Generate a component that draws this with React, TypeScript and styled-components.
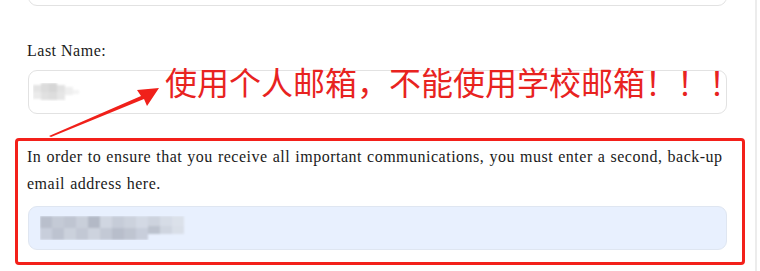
import React from 'react';
import styled, { createGlobalStyle } from 'styled-components';

const Global = createGlobalStyle`
  html, body {
    margin: 0;
    padding: 0;
    background: #fff;
  }
  body {
    font-family: "Liberation Serif", "Times New Roman", serif;
    color: #1a1a1a;
    overflow: hidden;
  }
`;

const Page = styled.div`
  position: relative;
  width: 760px;
  height: 271px;
  overflow: hidden;
  display: flex;
`;

const Form = styled.div`
  width: 699px;
  margin-left: 28px;
  margin-top: -38px;
  display: flex;
  flex-direction: column;
`;

const Scrollbar = styled.div`
  margin-left: 28px;
  width: 2px;
  background: #ececec;
`;

const Field = styled.div<{ $filled?: boolean }>`
  box-sizing: border-box;
  height: 44px;
  border: 1px solid ${p => (p.$filled ? '#dfe6f1' : '#e2e2e2')};
  border-radius: 9px;
  background: ${p => (p.$filled ? '#e8f0fe' : '#fff')};
  display: flex;
  align-items: center;
  padding-left: ${p => (p.$filled ? '11px' : '4px')};
`;

const Label = styled.div`
  font-size: 16px;
  letter-spacing: 0.5px;
  margin: 33px 0 0 -1px;
  height: 31px;
  line-height: 24px;
`;

const Notice = styled.div`
  position: relative;
  margin-top: 29px;
`;

const Text = styled.p`
  margin: 0 0 9px -1px;
  font-size: 16px;
  letter-spacing: 0.5px;
  word-spacing: 0.6px;
  line-height: 27px;
`;

const RedFrame = styled.div`
  position: absolute;
  left: -13px;
  top: -5px;
  width: 730px;
  height: 127px;
  box-sizing: border-box;
  border: 3.5px solid #f3201a;
  border-radius: 4px;
  pointer-events: none;
`;

const Warning = styled.div`
  position: absolute;
  left: 165px;
  top: 63px;
  font-family: "Noto Sans CJK SC", "Noto Sans", sans-serif;
  font-size: 32px;
  line-height: 36px;
  color: #e8231f;
  white-space: nowrap;
`;

const Overlay = styled.svg`
  position: absolute;
  left: 0;
  top: 0;
  pointer-events: none;
`;

type Cell = [number, number, number, number, string];

function Mosaic({ w, h, cells }: { w: number; h: number; cells: Cell[] }) {
  return (
    <svg width={w} height={h}>
      <defs>
        <filter id="soft" x="-10%" y="-10%" width="120%" height="120%">
          <feGaussianBlur stdDeviation="0.8" />
        </filter>
      </defs>
      <g filter="url(#soft)">
        {cells.map(([x, y, cw, ch, c], i) => (
          <rect key={i} x={x} y={y} width={cw} height={ch} fill={c} />
        ))}
      </g>
    </svg>
  );
}

const nameCells: Cell[] = [
  [0, 2, 8, 7, '#e4e4e4'],
  [8, 0, 8, 9, '#dcdcdc'],
  [16, 0, 8, 9, '#d6d6d6'],
  [24, 2, 8, 7, '#e2e2e2'],
  [0, 9, 8, 7, '#ebebeb'],
  [8, 9, 8, 8, '#e1e1e1'],
  [16, 9, 8, 8, '#dddddd'],
  [24, 9, 8, 8, '#e6e6e6'],
  [32, 4, 8, 8, '#efefef'],
  [40, 7, 6, 4, '#f3f3f3'],
];

const mailCells: Cell[] = [
  [0, 0, 12, 12, '#b9bfcc'],
  [12, 0, 12, 12, '#c4cad6'],
  [24, 0, 12, 12, '#bfc5d1'],
  [36, 0, 12, 12, '#c9cfda'],
  [48, 0, 12, 12, '#b3b9c6'],
  [60, 0, 12, 12, '#d0d6e1'],
  [72, 0, 12, 12, '#c6ccd8'],
  [84, 0, 12, 12, '#ccd2dd'],
  [96, 0, 12, 12, '#d3d9e4'],
  [108, 0, 12, 12, '#cdd3de'],
  [120, 0, 12, 12, '#d6dce6'],
  [132, 0, 12, 12, '#dbe1ea'],
  [0, 12, 12, 12, '#c8cedb'],
  [12, 12, 12, 12, '#bdc3d0'],
  [24, 12, 12, 12, '#cbd1dc'],
  [36, 12, 12, 12, '#c2c8d4'],
  [48, 12, 12, 12, '#cdd3de'],
  [60, 12, 12, 12, '#c3c9d5'],
  [72, 12, 12, 12, '#b8becb'],
  [84, 12, 12, 12, '#bfc5d1'],
  [96, 12, 12, 12, '#c8cedb'],
  [108, 10, 12, 8, '#bcc2ce'],
  [120, 10, 12, 8, '#cfd5e0'],
  [132, 10, 12, 8, '#d9dfe8'],
];

export default function App() {
  return (
    <>
      <Global />
      <Page>
        <Form>
          <Field />
          <Label>Last Name:</Label>
          <Field>
            <Mosaic w={48} h={18} cells={nameCells} />
          </Field>
          <Notice>
            <RedFrame />
            <Text>
              In order to ensure that you receive all important communications, you must enter a second, back-up email
              address here.
            </Text>
            <Field $filled>
              <Mosaic w={148} h={24} cells={mailCells} />
            </Field>
          </Notice>
        </Form>
        <Scrollbar />
        <Warning>使用个人邮箱，不能使用学校邮箱！！！</Warning>
        <Overlay width={760} height={271} viewBox="0 0 760 271">
          <polygon points="49,136 141,96 137,90 159,88 147,106 144,99 51,137" fill="#f0201a" />
        </Overlay>
      </Page>
    </>
  );
}
